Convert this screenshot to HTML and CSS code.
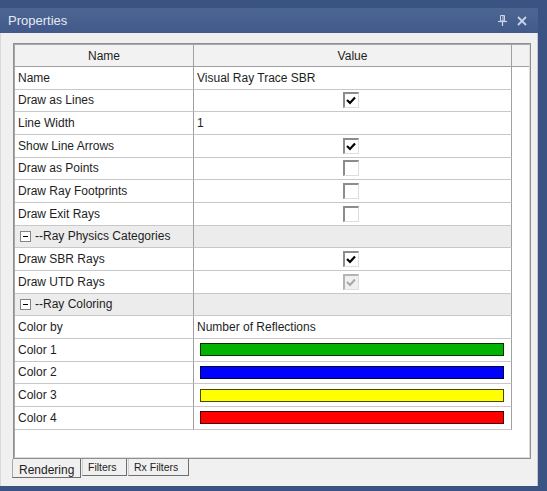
FILE: index.html
```html
<!DOCTYPE html>
<html>
<head>
<meta charset="utf-8">
<link rel="stylesheet" href="styles.css">
</head>
<body>
<div class="window">
  <div class="titlebar">
    <span class="title">Properties</span>
    <span class="tools">
      <svg class="pin" width="9" height="11" viewBox="0 0 9 11"><path d="M2.5 0.5 H6.5 V6 H2.5 Z M5 0.5 V6" fill="none" stroke="#c9d4e6" stroke-width="1"/><path d="M0 6.5 H9" stroke="#c9d4e6" stroke-width="1.2"/><path d="M4.5 7 V11" stroke="#c9d4e6" stroke-width="1.2"/></svg>
      <svg class="close" width="10" height="10" viewBox="0 0 10 10"><path d="M1 1 L9 9 M9 1 L1 9" stroke="#c9d4e6" stroke-width="1.8"/></svg>
    </span>
  </div>
  <div class="panel">
    <div class="frame">
      <div class="inner">
        <div class="head">
          <div class="hcell">Name</div>
          <div class="hcell">Value</div>
          <div class="hcell spare"></div>
        </div>
        <div class="rows">
          <div class="row"><div class="nc">Name</div><div class="vc">Visual Ray Trace SBR</div></div>
          <div class="row"><div class="nc">Draw as Lines</div><div class="vc center"><span class="cb"><svg width="10" height="9" viewBox="0 0 10 9"><path d="M1 4 L4 7 L9 1.5" fill="none" stroke="#000" stroke-width="2.2"/></svg></span></div></div>
          <div class="row"><div class="nc">Line Width</div><div class="vc">1</div></div>
          <div class="row"><div class="nc">Show Line Arrows</div><div class="vc center"><span class="cb"><svg width="10" height="9" viewBox="0 0 10 9"><path d="M1 4 L4 7 L9 1.5" fill="none" stroke="#000" stroke-width="2.2"/></svg></span></div></div>
          <div class="row"><div class="nc">Draw as Points</div><div class="vc center"><span class="cb"></span></div></div>
          <div class="row"><div class="nc">Draw Ray Footprints</div><div class="vc center"><span class="cb"></span></div></div>
          <div class="row"><div class="nc">Draw Exit Rays</div><div class="vc center"><span class="cb"></span></div></div>
          <div class="row cat"><div class="nc"><span class="minus"></span>--Ray Physics Categories</div><div class="vc"></div></div>
          <div class="row"><div class="nc">Draw SBR Rays</div><div class="vc center"><span class="cb"><svg width="10" height="9" viewBox="0 0 10 9"><path d="M1 4 L4 7 L9 1.5" fill="none" stroke="#000" stroke-width="2.2"/></svg></span></div></div>
          <div class="row"><div class="nc">Draw UTD Rays</div><div class="vc center"><span class="cb dis"><svg width="10" height="9" viewBox="0 0 10 9"><path d="M1 4 L4 7 L9 1.5" fill="none" stroke="#a8a8a8" stroke-width="2"/></svg></span></div></div>
          <div class="row cat"><div class="nc"><span class="minus"></span>--Ray Coloring</div><div class="vc"></div></div>
          <div class="row"><div class="nc">Color by</div><div class="vc">Number of Reflections</div></div>
          <div class="row"><div class="nc">Color 1</div><div class="vc"><span class="bar green"></span></div></div>
          <div class="row"><div class="nc">Color 2</div><div class="vc"><span class="bar blue"></span></div></div>
          <div class="row"><div class="nc">Color 3</div><div class="vc"><span class="bar yellow"></span></div></div>
          <div class="row"><div class="nc">Color 4</div><div class="vc"><span class="bar red"></span></div></div>
        </div>
      </div>
    </div>
    <div class="tabs">
      <div class="tab sel">Rendering</div>
      <div class="tab">Filters</div>
      <div class="tab">Rx Filters</div>
    </div>
  </div>
</div>
</body>
</html>
```

FILE: styles.css
```css
body {
  margin: 0;
  width: 547px;
  height: 491px;
  overflow: hidden;
  background: #3a5382;
  font-family: "Liberation Sans", Arial, sans-serif;
  color: #1e1e1e;
}

.window {
  width: 538px;
  margin-top: 8px;
}

.titlebar {
  height: 25px;
  box-sizing: border-box;
  background: linear-gradient(#4c6692, #42598a);
  display: flex;
  align-items: center;
  justify-content: space-between;
  padding: 0 11px 0 8px;
}

.title {
  color: #e4eaf4;
  font-size: 13px;
}

.tools {
  display: flex;
  align-items: center;
  gap: 10px;
}

.panel {
  height: 453px;
  box-sizing: border-box;
  background: #f0f0f0;
  border-left: 1px solid #d4d9e2;
  border-right: 1px solid #c4c8ce;
  padding: 10px 0 0 12px;
}

.frame {
  width: 518px;
  height: 416px;
  box-sizing: border-box;
  border: 1px solid #8f8f8f;
}

.inner {
  height: 100%;
  box-sizing: border-box;
  background: #fff;
  border-top: 1px solid #a8a8a8;
  border-left: 1px solid #a8a8a8;
  border-right: 1px solid #dcdcdc;
  border-bottom: 1px solid #dcdcdc;
}

.head {
  display: grid;
  grid-template-columns: 179px 318px 1fr;
  height: 22px;
}

.hcell {
  box-sizing: border-box;
  background: #f2f2f2;
  border-right: 1px solid #a0a0a0;
  border-bottom: 1px solid #a0a0a0;
  font-size: 12px;
  display: flex;
  align-items: center;
  justify-content: center;
}

.hcell.spare {
  border-right: none;
}

.rows {
  width: 497px;
}

.row {
  display: grid;
  grid-template-columns: 179px 318px;
  height: 22.67px;
}

.nc, .vc {
  box-sizing: border-box;
  border-bottom: 1px solid #c8c8c8;
  border-right: 1px solid #a0a0a0;
  font-size: 12px;
  display: flex;
  align-items: center;
  padding-left: 3px;
  white-space: nowrap;
}

.vc.center {
  justify-content: center;
  padding-left: 0;
}

.row.cat .nc, .row.cat .vc {
  background: #ececec;
}

.minus {
  width: 11px;
  height: 11px;
  box-sizing: border-box;
  border: 1px solid #858585;
  background: #fff;
  margin: 0 4px 0 2px;
  position: relative;
}

.minus::after {
  content: "";
  position: absolute;
  left: 2px;
  top: 4px;
  width: 5px;
  height: 1px;
  background: #000;
}

.cb {
  width: 16px;
  height: 16px;
  box-sizing: border-box;
  background: #fff;
  border-top: 2px solid #8c8c8c;
  border-left: 2px solid #8c8c8c;
  border-right: 1px solid #dedede;
  border-bottom: 1px solid #dedede;
  display: flex;
  align-items: center;
  justify-content: center;
  margin-left: -4px;
}

.cb.dis {
  background: #f0f0f0;
  border-top-color: #b4b4b4;
  border-left-color: #b4b4b4;
}

.bar {
  display: block;
  width: 304px;
  height: 13px;
  box-sizing: border-box;
  margin-left: 3px;
  border: 1px solid rgba(0, 0, 0, 0.72);
}

.green { background: #00b300; }
.blue { background: #0000ff; }
.yellow { background: #ffff00; }
.red { background: #ff0000; }

.tabs {
  display: flex;
  align-items: flex-start;
  margin-left: -1px;
  gap: 1px;
}

.tab {
  height: 17px;
  box-sizing: border-box;
  background: #f0f0f0;
  border-left: 1px solid #d0d0d0;
  border-right: 1px solid #6e6e6e;
  border-bottom: 1px solid #6e6e6e;
  font-size: 10.5px;
  padding: 0 5px;
  display: flex;
  align-items: center;
}

.tab:nth-child(2) { width: 45px; }
.tab:nth-child(3) { width: 61px; }

.tab.sel {
  width: 69px;
  height: 19px;
  font-size: 12px;
  padding: 3px 0 0 6px;
  border-left-color: #a8a8a8;
}
```
